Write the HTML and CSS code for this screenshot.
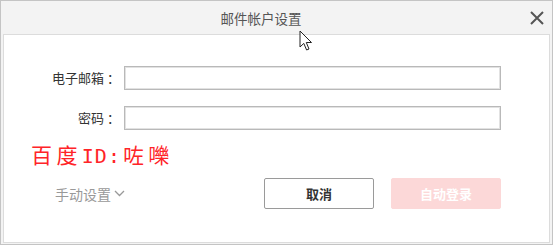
FILE: index.html
```html
<!DOCTYPE html>
<html lang="zh-CN">
<head>
<meta charset="utf-8">
<title>邮件帐户设置</title>
<link rel="stylesheet" href="styles.css">
</head>
<body>
<div class="dialog">
  <div class="titlebar">
    <div class="title">邮件帐户设置</div>
    <button class="close" aria-label="关闭">
      <svg width="14" height="14" viewBox="0 0 14 14"><path d="M1 1 L13 13 M13 1 L1 13" stroke="#555" stroke-width="2" fill="none"/></svg>
    </button>
  </div>
  <div class="content">
    <div class="form">
      <label class="label">电子邮箱<span class="colon">：</span></label>
      <input class="field" type="text">
      <label class="label">密码<span class="colon">：</span></label>
      <input class="field" type="password">
    </div>
    <div class="watermark">百度<span class="latin">ID:</span>咗嚛</div>
    <div class="footer">
      <div class="manual">手动设置<svg class="chev" width="11" height="7" viewBox="0 0 11 7"><path d="M1 1 L5.5 5.5 L10 1" stroke="#999" stroke-width="1.3" fill="none"/></svg></div>
      <div class="buttons">
        <button class="btn cancel">取消</button>
        <button class="btn login">自动登录</button>
      </div>
    </div>
  </div>
  <svg class="cursor" width="14" height="22" viewBox="0 0 14 22"><path d="M1 1 L1 17 L4.8 13.4 L7.6 20 L10 19 L7.3 12.5 L12.5 12.5 Z" fill="#fff" stroke="#222" stroke-width="1" stroke-linejoin="round"/></svg>
</div>
</body>
</html>
```

FILE: styles.css
```css
html, body {
  margin: 0;
  padding: 0;
  background: #ffffff;
}
body {
  font-family: "Noto Sans CJK SC", "Noto Sans", sans-serif;
}
.dialog {
  position: relative;
  width: 553px;
  height: 245px;
  box-sizing: border-box;
  border: 1px solid #c4c4c4;
  background: #f3f3f3;
  display: flex;
  flex-direction: column;
}
.titlebar {
  height: 33px;
  display: flex;
  align-items: center;
  flex: none;
}
.title {
  flex: 1;
  text-align: center;
  font-size: 13.5px;
  color: #555;
  line-height: 18px;
  padding-top: 1px;
}
.close {
  width: 31px;
  height: 33px;
  border: none;
  background: transparent;
  padding: 0;
  display: flex;
  align-items: center;
  justify-content: center;
}
.content {
  flex: 1;
  margin: 0 2px 1px 2px;
  border: 1px solid #dcdcdc;
  background: #fff;
  padding: 31px 48px 0 0;
}
.form {
  display: grid;
  grid-template-columns: 116px 377px;
  column-gap: 4px;
  row-gap: 16px;
  align-items: center;
}
.label {
  text-align: right;
  font-size: 13px;
  color: #333;
  line-height: 24px;
}
.colon {
  margin-left: 3px;
}
.field {
  height: 24px;
  box-sizing: border-box;
  border: 1px solid #b9b9b9;
  box-shadow: inset 0 0 0 1px #e2e2e2;
  margin: 0;
  padding: 0 4px;
  outline: none;
}
.watermark {
  margin: 11px 0 0 27px;
  font-size: 21px;
  line-height: 26px;
  letter-spacing: 4.4px;
  color: #ff2428;
  font-family: "Noto Sans CJK SC", sans-serif;
}
.latin {
  font-family: "DejaVu Sans Mono", monospace;
  font-size: 20px;
  letter-spacing: 1px;
  margin-right: 2px;
}
.footer {
  margin-top: 9px;
  display: flex;
  align-items: center;
  justify-content: space-between;
  padding-left: 51px;
}
.manual {
  font-size: 14px;
  color: #999;
  display: flex;
  align-items: center;
  gap: 3px;
}
.buttons {
  display: flex;
  gap: 17px;
}
.btn {
  width: 110px;
  height: 31px;
  box-sizing: border-box;
  border-radius: 2px;
  font-family: "Noto Sans CJK SC", sans-serif;
  font-size: 13px;
  font-weight: bold;
  margin: 0;
  padding: 0;
}
.cancel {
  background: #fff;
  border: 1px solid #9a9a9a;
  color: #333;
}
.login {
  background: #fcd8d8;
  border: 1px solid #fcd8d8;
  color: #fff;
}
.cursor {
  position: absolute;
  left: 298px;
  top: 29px;
}
```
